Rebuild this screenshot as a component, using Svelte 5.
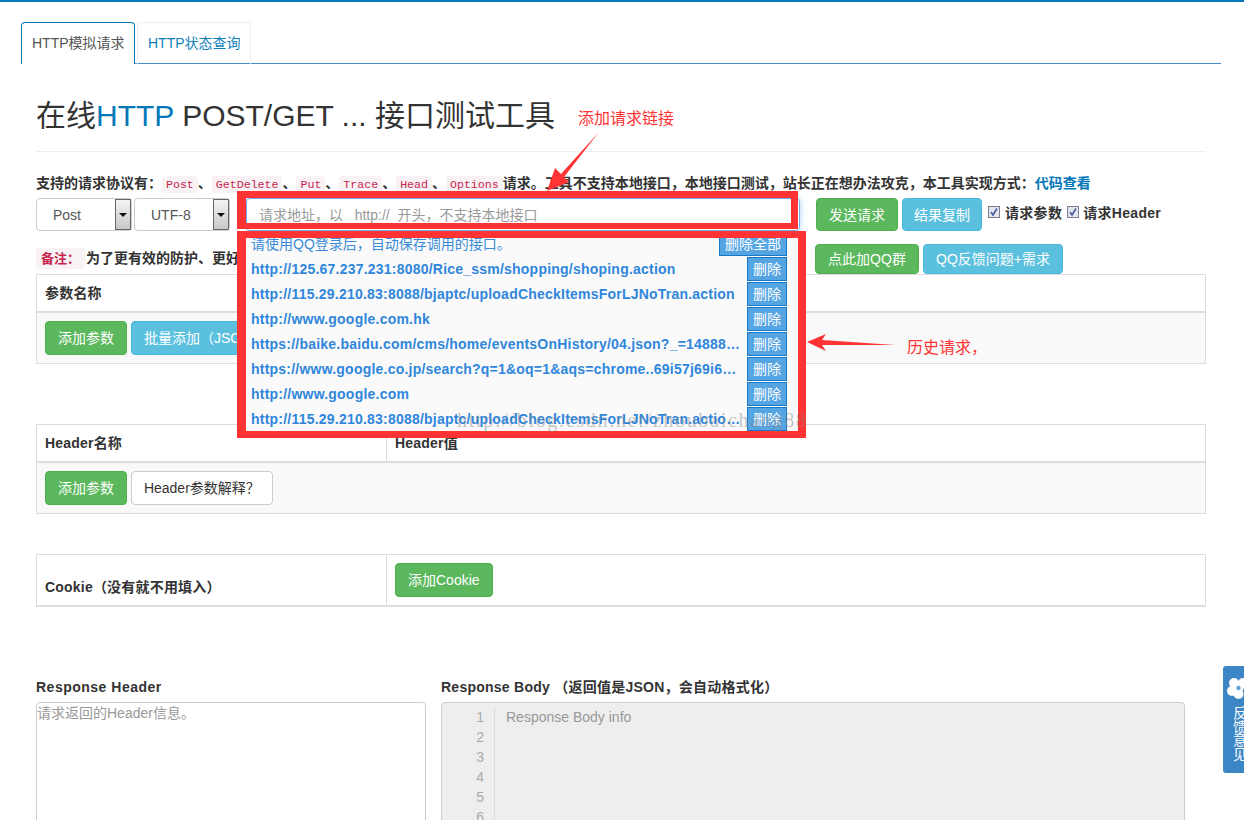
<script>
  const protocols = ['Post', 'GetDelete', 'Put', 'Trace', 'Head', 'Options'];
  const history = [
    'http://125.67.237.231:8080/Rice_ssm/shopping/shoping.action',
    'http://115.29.210.83:8088/bjaptc/uploadCheckItemsForLJNoTran.action',
    'http://www.google.com.hk',
    'https://baike.baidu.com/cms/home/eventsOnHistory/04.json?_=1488888888888',
    'https://www.google.co.jp/search?q=1&oq=1&aqs=chrome..69i57j69i60l3.1234j0j7',
    'http://www.google.com',
    'http://115.29.210.83:8088/bjaptc/uploadCheckItemsForLJNoTran.action?id=1'
  ];
  const lines = [1, 2, 3, 4, 5, 6, 7];
</script>

{#snippet fakeSelect(label)}
  <div class="select">
    <span class="select-label">{label}</span>
    <span class="select-btn"><span class="caret"></span></span>
  </div>
{/snippet}

{#snippet check(label)}
  <span class="check">
    <svg width="12" height="12" viewBox="0 0 12 12">
      <rect x="0.5" y="0.5" width="11" height="11" fill="#e4e6ee" stroke="#7a7f90" />
      <path d="M3 6l2 3 4-6.5" fill="none" stroke="#4a5a9c" stroke-width="1.6" />
    </svg>
  </span>
  <b class="check-label">{label}</b>
{/snippet}

<div class="page">
  <div class="tabs">
    <a class="tab active" href="#a">HTTP模拟请求</a>
    <a class="tab" href="#b">HTTP状态查询</a>
  </div>

  <main class="content">
    <h1>在线<span class="blue">HTTP</span> POST/GET ... 接口测试工具</h1>
    <hr />
    <p class="protocols">
      支持的请求协议有：{#each protocols as p, i}<code>{p}</code>{i < protocols.length - 1 ? '、' : ''}{/each}请求。工具不支持本地接口，本地接口测试，站长正在想办法攻克，本工具实现方式：<a href="#c">代码查看</a>
    </p>

    <div class="request-row">
      {@render fakeSelect('Post')}
      {@render fakeSelect('UTF-8')}
      <input class="url" placeholder="请求地址，以   http://  开头，不支持本地接口" />
      <button class="btn green send">发送请求</button>
      <button class="btn cyan copy">结果复制</button>
      {@render check('请求参数')}
      {@render check('请求Header')}
    </div>

    <div class="note-row">
      <div class="note"><code class="note-code">备注：</code><b>为了更有效的防护、更好的服务，请使用QQ登录</b></div>
      <button class="btn green small qq">点此加QQ群</button>
      <button class="btn cyan small feedback-btn">QQ反馈问题+需求</button>
    </div>

    <table>
      <thead><tr><th class="first">参数名称</th><th>参数值</th></tr></thead>
      <tfoot><tr><td colspan="2"><button class="btn green">添加参数</button> <button class="btn cyan">批量添加（JSON）</button></td></tr></tfoot>
    </table>

    <table class="gap">
      <thead><tr><th class="first">Header名称</th><th>Header值</th></tr></thead>
      <tfoot><tr><td colspan="2"><button class="btn green">添加参数</button> <button class="btn white">Header参数解释？</button></td></tr></tfoot>
    </table>

    <table class="cookie">
      <tbody><tr><th class="first">Cookie（没有就不用填入）</th><td><button class="btn green">添加Cookie</button></td></tr></tbody>
    </table>

    <div class="responses">
      <section class="res-head">
        <h2>Response Header</h2>
        <textarea placeholder="请求返回的Header信息。"></textarea>
      </section>
      <section class="res-body">
        <h2>Response Body （返回值是JSON，会自动格式化）</h2>
        <div class="editor">
          <div class="gutter">{#each lines as n}<div>{n}</div>{/each}</div>
          <div class="code">Response Body info</div>
        </div>
      </section>
    </div>
  </main>

  <div class="dropdown">
    <div class="dd-row">
      <span class="dd-tip">请使用QQ登录后，自动保存调用的接口。</span>
      <button class="del all">删除全部</button>
    </div>
    {#each history as url}
      <div class="dd-row">
        <a class="dd-url" href="#u">{url}</a>
        <button class="del">删除</button>
      </div>
    {/each}
  </div>

  <div class="red-box box-a"></div>
  <div class="red-box box-b"></div>
  <div class="watermark">http://blog.csdn.net/zhoubaichang88</div>
  <svg class="arrows" width="1244" height="820" viewBox="0 0 1244 820">
    <polygon points="599,132 561,174 555,168 547,191 569,182 564,177" fill="#f33" />
    <polygon points="807,342 826,334 822,340 895,345 822,345 826,351" fill="#f33" />
  </svg>
  <span class="mark mark-a">添加请求链接</span>
  <span class="mark mark-b">历史请求，</span>

  <aside class="side">
    <svg width="21" height="26" viewBox="0 0 21 26">
      <g fill="#fff">
        <circle cx="11" cy="10" r="5" /><circle cx="20" cy="10" r="5" />
        <circle cx="9" cy="18" r="5" /><circle cx="15.5" cy="21" r="5" /><circle cx="15" cy="14" r="6" />
      </g>
      <circle cx="15.5" cy="15" r="2.2" fill="#5aa0dc" />
    </svg>
    <div class="side-text">反<br />馈<br />意<br />见</div>
  </aside>
</div>

<style>
  :global(body) {
    margin: 0;
    background: #fff;
  }
  .page {
    position: relative;
    height: 818px;
    overflow: hidden;
    border-top: 2px solid #0278b8;
    font: 14px/20px "Liberation Sans", "Noto Sans CJK SC", sans-serif;
    color: #333;
  }
  .tabs {
    display: flex;
    gap: 2px;
    width: 1200px;
    height: 42px;
    box-sizing: border-box;
    margin: 20px 0 0 21px;
    border-bottom: 1px solid #428bca;
  }
  .tab {
    box-sizing: border-box;
    width: 114px;
    height: 42px;
    padding: 10px 0 10px 10px;
    border: 1px solid #eee;
    border-bottom: 0;
    border-radius: 4px 4px 0 0;
    color: #0f7fbc;
    text-decoration: none;
    white-space: nowrap;
  }
  .tab.active {
    color: #555;
    background: #fff;
    border-color: #0278b8;
  }
  .content {
    width: 1170px;
    margin-left: 36px;
  }
  h1 {
    margin: 32px 0 0;
    font-size: 30px;
    line-height: 40px;
    font-weight: 400;
  }
  .blue { color: #0278b8; }
  hr {
    height: 1px;
    margin: 15px 0 0;
    border: 0;
    background: #eee;
  }
  .protocols {
    margin: 21px 0 0;
    height: 20px;
    font-weight: 700;
    white-space: nowrap;
  }
  .protocols a { color: #0278b8; text-decoration: none; }
  code {
    padding: 2px 4px;
    font: 400 11.6px "Liberation Mono", "Noto Sans CJK SC", monospace;
    color: #c7254e;
    background: #f9f2f4;
    border-radius: 4px;
  }
  .request-row {
    display: flex;
    align-items: flex-start;
    margin-top: 5px;
    height: 33px;
  }
  .select {
    position: relative;
    box-sizing: border-box;
    display: flex;
    width: 96px;
    height: 33px;
    margin-right: 2px;
    border: 1px solid #ccc;
    border-radius: 4px;
    color: #555;
    line-height: 33px;
  }
  .select-label { flex: 1; padding-left: 16px; }
  .select-btn {
    display: flex;
    align-items: center;
    justify-content: center;
    box-sizing: border-box;
    width: 16px;
    border: 1px solid #666;
    background: linear-gradient(#f4f4f4, #c8c8c8);
  }
  .caret {
    width: 0;
    height: 0;
    border: 4px solid transparent;
    border-top: 4px solid #111;
    border-bottom: 0;
  }
  .url {
    box-sizing: border-box;
    width: 554px;
    height: 33px;
    margin: 0 16px 0 14px;
    padding: 6px 12px;
    border: 1px solid #66afe9;
    border-radius: 4px;
    font: inherit;
    color: #555;
    outline: 0;
    box-shadow: 0 0 6px rgba(102, 175, 233, .6);
  }
  .url::placeholder { color: #999; opacity: 1; }
  .btn {
    box-sizing: border-box;
    height: 34px;
    padding: 6px 12px;
    border: 1px solid #ccc;
    border-radius: 4px;
    font: inherit;
    color: #fff;
    background: #fff;
    white-space: nowrap;
  }
  .btn.green { background: #5cb85c; border-color: #4cae4c; }
  .btn.cyan { background: #5bc0de; border-color: #46b8da; }
  .btn.white { color: #333; }
  .send { width: 82px; height: 33px; }
  .copy { width: 80px; height: 33px; margin-left: 4px; padding: 6px 0; }
  .check {
    display: flex;
    margin: 8px 5px 0 6px;
  }
  .check + .check-label { margin-top: 5px; letter-spacing: .3px; }
  .check-label + .check { margin-left: 5px; margin-right: 4px; }
  .note-row {
    display: flex;
    margin-top: 13px;
    height: 30px;
    margin-left: -1px;
  }
  .note {
    width: 780px;
    height: 24px;
    padding-left: 1px;
    box-sizing: border-box;
    margin-top: 4px;
    overflow: hidden;
    white-space: nowrap;
  }
  .note-code {
    font: 700 13px "Noto Sans CJK SC", sans-serif;
    padding: 2px 5px;
    margin-right: 1px;
  }
  .btn.small { height: 30px; padding: 4px 12px; }
  .qq { width: 104px; }
  .feedback-btn { width: 140px; margin-left: 4px; }
  table {
    box-sizing: border-box;
    width: 1170px;
    border-collapse: collapse;
    table-layout: fixed;
    border: 1px solid #ddd;
  }
  table.gap { margin-top: 60px; }
  th, td {
    padding: 8px;
    border: 1px solid #ddd;
    text-align: left;
    vertical-align: middle;
  }
  th { letter-spacing: .2px; }
  .first { width: 350px; box-sizing: border-box; }
  thead th { height: 37px; box-sizing: border-box; border-bottom: 2px solid #ddd; }
  tfoot td { background: #f9f9f9; height: 51px; box-sizing: border-box; }
  .cookie { margin-top: 40px; border-bottom: 2px solid #ddd; }
  .cookie th { vertical-align: bottom; }
  .responses {
    display: flex;
    gap: 15px;
    margin-top: 70px;
  }
  h2 {
    margin: 0 0 5px;
    font-size: 14px;
    line-height: 20px;
    font-weight: 700;
    letter-spacing: .25px;
  }
  .res-head { width: 390px; }
  .res-head h2 { letter-spacing: .5px; }
  textarea {
    display: block;
    box-sizing: border-box;
    width: 390px;
    height: 200px;
    padding: 0;
    border: 1px solid #ccc;
    border-radius: 4px;
    font: inherit;
    resize: none;
    outline: 0;
  }
  textarea::placeholder { color: #999; opacity: 1; }
  .res-body { width: 744px; }
  .editor {
    display: flex;
    box-sizing: border-box;
    height: 200px;
    padding-top: 4px;
    border: 1px solid #ccc;
    border-radius: 4px;
    background: #eee;
    color: #999;
  }
  .gutter {
    width: 53px;
    box-sizing: border-box;
    padding-right: 10px;
    text-align: right;
    border-right: 1px solid #ddd;
    color: #aaa;
  }
  .code { padding-left: 11px; }
  .dropdown {
    position: absolute;
    left: 246px;
    top: 230px;
    width: 552px;
    height: 200px;
    background: #fafafa;
  }
  .dd-row {
    display: flex;
    justify-content: space-between;
    align-items: flex-start;
    height: 25px;
    padding: 0 11px 0 5px;
  }
  .dd-tip { color: #3b8cd8; line-height: 24px; }
  .dd-url {
    width: 490px;
    overflow: hidden;
    white-space: nowrap;
    text-overflow: ellipsis;
    color: #2f86dc;
    font-weight: 700;
    line-height: 24px;
    letter-spacing: .22px;
    text-decoration: none;
  }
  .del {
    box-sizing: border-box;
    width: 40px;
    height: 24px;
    padding: 0;
    border: 1px solid #1578c8;
    background: #56a5e3;
    color: #fff;
    font: inherit;
    line-height: 22px;
  }
  .del.all { width: 68px; }
  .watermark {
    position: absolute;
    left: 457px;
    top: 406px;
    font: 20px/24px "Liberation Serif", serif;
    letter-spacing: 1.7px;
    color: rgba(130, 130, 130, .45);
    white-space: nowrap;
    pointer-events: none;
  }
  .red-box {
    position: absolute;
    box-sizing: border-box;
    border-style: solid;
    border-color: #f33;
    pointer-events: none;
  }
  .box-a { left: 237px; top: 189px; width: 561px; height: 38px; border-width: 7px 7px 6px 9px; }
  .box-b { left: 237px; top: 229px; width: 569px; height: 207px; border-width: 7px 8px 7px 9px; }
  .arrows { position: absolute; left: 0; top: -2px; pointer-events: none; }
  .mark {
    position: absolute;
    color: #f33;
    white-space: nowrap;
    font: 16px/20px "Noto Sans CJK SC", sans-serif;
  }
  .mark-a { left: 578px; top: 105px; }
  .mark-b { left: 907px; top: 334px; }
  .side {
    position: absolute;
    right: 0;
    top: 664px;
    width: 21px;
    height: 107px;
    overflow: hidden;
    border-radius: 3px 0 0 3px;
    background: #3d86c6;
    color: #fff;
  }
  .side svg { display: block; margin-top: 7px; }
  .side-text { margin: 8px 0 0 10px; width: 14px; line-height: 13.5px; }
</style>
